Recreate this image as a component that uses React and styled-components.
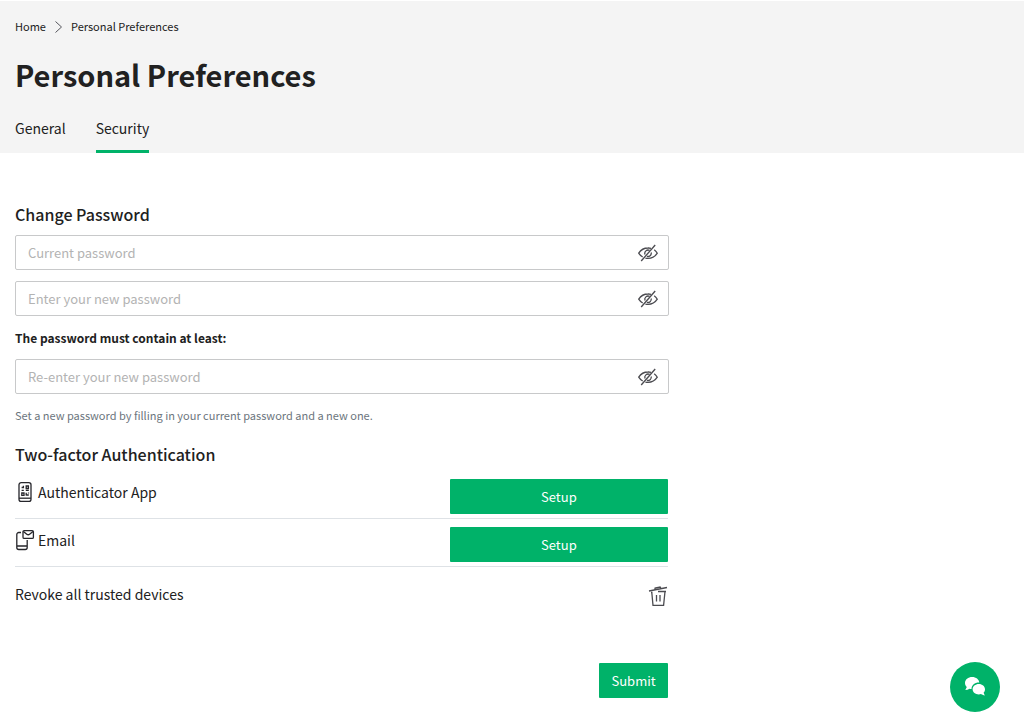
import React, { useState } from "react";
import styled, { createGlobalStyle } from "styled-components";

const GlobalStyle = createGlobalStyle`
  *, *::before, *::after { box-sizing: border-box; }
  body {
    margin: 0;
    background: #fff;
    color: #212121;
    font-family: "Noto Sans CJK SC", "Open Sans", sans-serif;
    font-size: 14px;
    line-height: 24px;
  }
  button, input { font-family: inherit; }
`;

const Header = styled.header`
  margin-top: 1px;
  padding: 15px 15px 0;
  background: #f4f4f4;
`;

const Breadcrumb = styled.nav`
  display: flex;
  align-items: center;
  gap: 8px;
  font-size: 11px;
  line-height: 20px;
`;

const Crumb = styled.a`
  color: inherit;
  text-decoration: none;
`;

const Title = styled.h1`
  margin: 0;
  padding: 14px 0 18px;
  font-size: 29px;
  line-height: 48px;
  font-weight: 700;
`;

const Tabs = styled.nav`
  display: flex;
  gap: 30px;
`;

const Tab = styled.a`
  height: 37px;
  color: inherit;
  text-decoration: none;
  border-bottom: 3px solid ${(p) => (p.$active ? "#00b269" : "transparent")};
`;

const Form = styled.form`
  width: 66.667%;
  padding: 48px 15px 20px;
`;

const SectionTitle = styled.h2`
  margin: 0;
  padding-bottom: 8px;
  font-size: 16px;
  line-height: 26px;
  font-weight: 500;
`;

const Field = styled.div`
  display: flex;
  align-items: center;
  height: 35px;
  margin: 0 -1px 11px 0;
  border: 1px solid #c8c9ca;
  border-radius: 2px;
`;

const Input = styled.input`
  flex: 1;
  min-width: 0;
  height: 33px;
  padding: 0 12px;
  border: 0;
  outline: 0;
  background: transparent;
  color: inherit;
  font-size: 13px;
  &::placeholder { color: #b3b3b3; opacity: 1; }
`;

const IconButton = styled.button`
  display: flex;
  padding: 0;
  margin-right: ${(p) => (p.$inset ? "10px" : "0")};
  border: 0;
  background: none;
  color: #4b4b50;
  cursor: pointer;
`;

const Requirement = styled.p`
  margin: 0;
  padding-bottom: 11px;
  font-size: 12px;
  line-height: 21px;
  font-weight: 700;
`;

const Hint = styled.p`
  margin: 0;
  padding-bottom: 16px;
  color: #6c757d;
  font-size: 11px;
  line-height: 20px;
`;

const Methods = styled.div`
  padding: 4px 0;
`;

const Method = styled.div`
  display: grid;
  grid-template-columns: 2fr 1fr;
  height: 40px;
  margin-bottom: 8px;
  border-bottom: 1px solid #dee2e6;
`;

const MethodName = styled.div`
  display: flex;
  align-items: center;
  gap: 3px;
  height: 26px;
`;

const Button = styled.button`
  height: 35px;
  padding: 0 12px;
  border: 0;
  border-radius: 1px;
  background: #00b269;
  color: #fff;
  font-size: 13px;
  cursor: pointer;
`;

const Revoke = styled.div`
  display: flex;
  align-items: flex-start;
  justify-content: space-between;
  padding-top: 3px;
`;

const RevokeButton = styled(IconButton)`
  padding-top: 3px;
`;

const Actions = styled.div`
  display: flex;
  justify-content: flex-end;
  padding-top: 56px;
`;

const ChatButton = styled.button`
  position: fixed;
  right: 24px;
  bottom: 8px;
  display: flex;
  align-items: center;
  justify-content: center;
  width: 50px;
  height: 50px;
  padding: 0;
  border: 0;
  border-radius: 50%;
  background: #00b269;
  cursor: pointer;
`;

const ChevronIcon = () => (
  <svg width="9" height="14" viewBox="0 0 9 14" fill="none" stroke="#55565c" strokeWidth="1" aria-hidden="true">
    <path d="M1.500 2.500 7.500 8 1.500 13.500" />
  </svg>
);

const EyeIcon = () => (
  <svg width="20" height="20" viewBox="0 0 20 20" fill="none" stroke="currentColor" strokeWidth="1.300" aria-hidden="true">
    <path d="M13 5.300A11 11 0 0 0 10 5C6 5 2.800 7 .7 10.200c1 1.600 2.400 2.900 4 3.800M16.200 6.700c1.200.9 2.300 2.100 3.100 3.500C17.200 13.400 14 15.400 10 15.400c-.9 0-1.800-.1-2.600-.3" />
    <path d="M11.600 7.400A3.300 3.300 0 0 0 7 11.500M13.200 9.500a3.300 3.300 0 0 1-4.300 3.800" />
    <path d="M3.200 18 17.200 2" />
  </svg>
);

const AppIcon = () => (
  <svg width="20" height="22" viewBox="0 0 20 22" fill="none" stroke="#26262b" strokeWidth="1.300" aria-hidden="true">
    <rect x="4" y="1.600" width="12" height="18.800" rx="2.200" />
    <path d="M4 17.200h12" />
    <path d="M6.600 6.500h2.400M8.400 4.800v2.400M11.200 5h2.200v2.500h-2.200zM6.600 9.300h2.200M10.800 9.300h3M6.800 12h2.200v2.300H6.800zM11.200 11.700v2.900M11.200 14h2.600M13.500 11.400v1.200" />
  </svg>
);

const EmailIcon = () => (
  <svg width="20" height="22" viewBox="0 0 20 22" fill="none" stroke="#26262b" strokeWidth="1.300" aria-hidden="true">
    <path d="M6 3.500H3.800a2 2 0 0 0-2 2v13a2 2 0 0 0 2 2h6.400a2 2 0 0 0 2-2v-7.500M1.800 17h10.400" />
    <rect x="8" y="1.600" width="10.400" height="7.800" rx="1.200" />
    <path d="M8.400 2.400 11.800 5.200a2.200 2.200 0 0 0 2.800 0L18 2.400" />
  </svg>
);

const TrashIcon = () => (
  <svg width="20" height="22" viewBox="0 0 20 22" fill="none" stroke="currentColor" strokeWidth="1.300" aria-hidden="true">
    <path d="M1 6 19 2.500M6.800 4.800l.3-1.800 5-1 .8 1.600M3 7.500h1.500M10 6.500h8M3.800 7.500 5 20.400h10.600L17 6.500M8.500 10v6.500M12 10v6.500" />
  </svg>
);

const ChatIcon = () => (
  <svg width="22" height="22" viewBox="0 0 22 22" fill="#fff" aria-hidden="true">
    <path d="M8.200 1C4.200 1 1 3.600 1 7c0 1.600.7 3 1.800 4L1.300 14c1.600 0 3-.4 4.200-1.200.7.200 1.400.2 2 .2C7.600 8.900 11 6.400 15.300 6.600 15 3.400 12 1 8.200 1Z" />
    <path d="M14.800 8C11.400 8 8.600 10.300 8.600 13.200s2.800 5.200 6.200 5.200c.8 0 1.500-.1 2.200-.3 1 .7 2.200 1.200 3.800 1.300l-1.200-2.700c.9-1 1.400-2.100 1.400-3.500C21 10.300 18.200 8 14.800 8Z" />
  </svg>
);

function PasswordField({ label }) {
  const [visible, setVisible] = useState(false);
  return (
    <Field>
      <Input type={visible ? "text" : "password"} placeholder={label} aria-label={label} />
      <IconButton $inset type="button" aria-label="Toggle password visibility" onClick={() => setVisible(!visible)}>
        <EyeIcon />
      </IconButton>
    </Field>
  );
}

export default function App() {
  return (
    <>
      <GlobalStyle />
      <Header>
        <Breadcrumb aria-label="Breadcrumb">
          <Crumb href="#home">Home</Crumb>
          <ChevronIcon />
          <Crumb href="#preferences">Personal Preferences</Crumb>
        </Breadcrumb>
        <Title>Personal Preferences</Title>
        <Tabs>
          <Tab href="#general">General</Tab>
          <Tab href="#security" $active aria-current="page">Security</Tab>
        </Tabs>
      </Header>
      <main>
        <Form onSubmit={(e) => e.preventDefault()}>
          <SectionTitle>Change Password</SectionTitle>
          <PasswordField label="Current password" />
          <PasswordField label="Enter your new password" />
          <Requirement>The password must contain at least:</Requirement>
          <PasswordField label="Re-enter your new password" />
          <Hint>Set a new password by filling in your current password and a new one.</Hint>
          <SectionTitle>Two-factor Authentication</SectionTitle>
          <Methods>
            <Method>
              <MethodName><AppIcon />Authenticator App</MethodName>
              <Button type="button">Setup</Button>
            </Method>
            <Method>
              <MethodName><EmailIcon />Email</MethodName>
              <Button type="button">Setup</Button>
            </Method>
          </Methods>
          <Revoke>
            Revoke all trusted devices
            <RevokeButton type="button" aria-label="Revoke all trusted devices"><TrashIcon /></RevokeButton>
          </Revoke>
          <Actions>
            <Button type="submit">Submit</Button>
          </Actions>
        </Form>
      </main>
      <ChatButton type="button" aria-label="Open chat"><ChatIcon /></ChatButton>
    </>
  );
}
